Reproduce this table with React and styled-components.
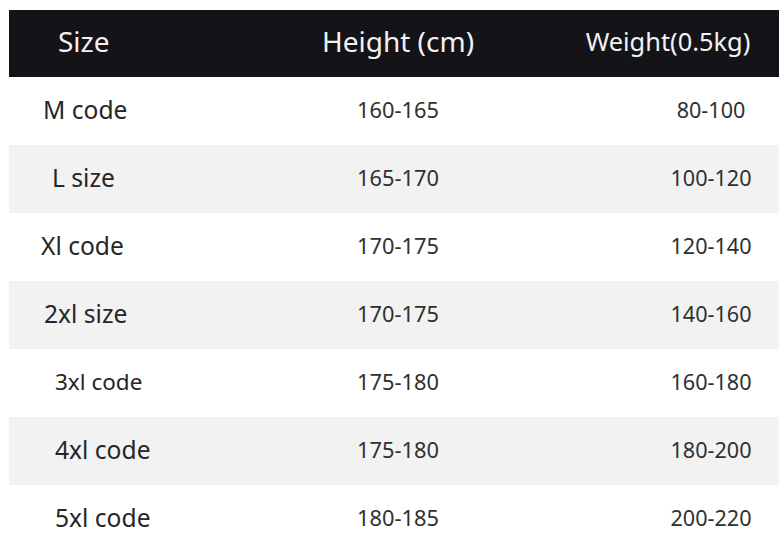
import React from "react";
import styled, { createGlobalStyle } from "styled-components";

const GlobalStyle = createGlobalStyle`
  html, body {
    margin: 0;
    padding: 0;
    background: #ffffff;
  }
  body {
    font-family: "Noto Sans", "Open Sans", sans-serif;
    overflow: hidden;
  }
`;

const ROWS = [
  { size: "M code", indent: 34, height: "160-165", weight: "80-100" },
  { size: "L size", indent: 43, height: "165-170", weight: "100-120" },
  { size: "Xl code", indent: 32, height: "170-175", weight: "120-140" },
  { size: "2xl size", indent: 35, height: "170-175", weight: "140-160" },
  { size: "3xl code", indent: 46, height: "175-180", weight: "160-180", small: true },
  { size: "4xl code", indent: 46, height: "175-180", weight: "180-200" },
  { size: "5xl code", indent: 46, height: "180-185", weight: "200-220" },
];

const App = () => (
  <>
    <GlobalStyle />
    <Page>
      <Chart>
        <HeaderRow>
          <SizeCell $indent={49} $head>Size</SizeCell>
          <HeightCell $head>Height (cm)</HeightCell>
          <WeightCell $head>Weight(0.5kg)</WeightCell>
        </HeaderRow>
        {ROWS.map((row, i) => (
          <Row key={row.size} $shaded={i % 2 === 1}>
            <SizeCell $indent={row.indent} $small={row.small}>
              {row.size}
            </SizeCell>
            <HeightCell>{row.height}</HeightCell>
            <WeightCell>{row.weight}</WeightCell>
          </Row>
        ))}
      </Chart>
    </Page>
  </>
);

export default App;

const Page = styled.div`
  width: 779px;
  height: 543px;
  padding: 10px 0 0 9px;
  box-sizing: border-box;
`;

const Chart = styled.div`
  display: flex;
  flex-direction: column;
`;

const HeaderRow = styled.div`
  display: flex;
  align-items: center;
  height: 67px;
  padding-bottom: 6px;
  box-sizing: border-box;
  background: #141418;
  color: #f2f2f2;
`;

const Row = styled.div`
  display: flex;
  align-items: center;
  height: 68px;
  padding-bottom: 3px;
  box-sizing: border-box;
  background: ${(p) => (p.$shaded ? "#f2f2f2" : "#ffffff")};
  color: #262626;
`;

const SizeCell = styled.div`
  width: 251px;
  box-sizing: border-box;
  padding-left: ${(p) => p.$indent}px;
  font-size: ${(p) => (p.$head ? "28px" : p.$small ? "22.5px" : "24.6px")};
  white-space: nowrap;
`;

const HeightCell = styled.div`
  width: 276px;
  text-align: center;
  font-size: ${(p) => (p.$head ? "28px" : "21.8px")};
  color: ${(p) => (p.$head ? "inherit" : "#303030")};
  white-space: nowrap;
`;

const WeightCell = styled.div`
  flex: 1;
  box-sizing: border-box;
  text-align: center;
  padding-left: ${(p) => (p.$head ? "21px" : "107px")};
  font-size: ${(p) => (p.$head ? "25.4px" : "21.6px")};
  color: ${(p) => (p.$head ? "inherit" : "#303030")};
  white-space: nowrap;
`;
